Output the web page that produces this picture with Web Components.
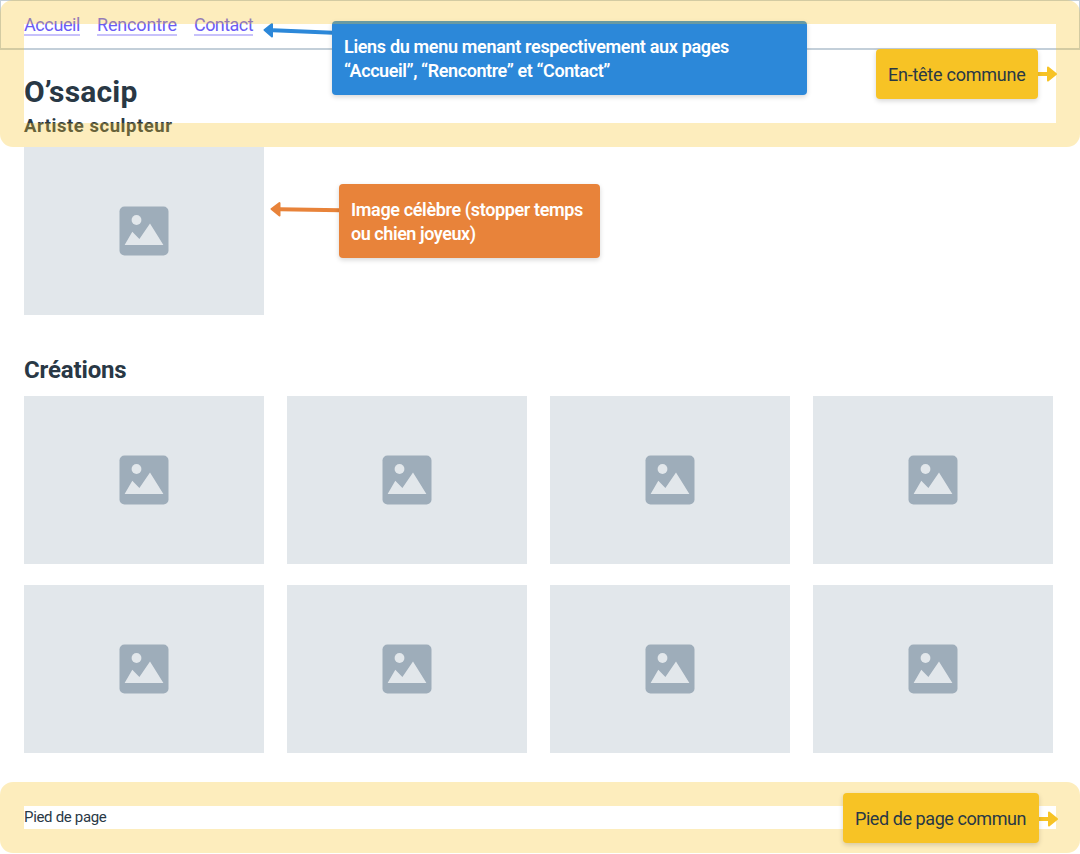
<!DOCTYPE html>
<html lang="fr">
<head>
<meta charset="utf-8">
<title>O’ssacip</title>
<style>
html,body{margin:0;background:#fff;overflow:hidden}
body{font-family:Roboto,"Liberation Sans",sans-serif;color:#293845}
</style>
</head>
<body>
<wire-page></wire-page>
<script>
const define = (name, html, after) => customElements.define(name, class extends HTMLElement {
  constructor() {
    super();
    const t = document.createElement('template');
    t.innerHTML = html;
    this.attachShadow({mode: 'open'}).append(t.content.cloneNode(true));
  }
  connectedCallback() { if (after) after(this); }
});

/* One line of text, tracked so that it fills the width given by its "w" attribute. */
define('fit-text', `<style>:host{display:block;white-space:nowrap}span{display:inline-block}</style><span><slot></slot></span>`, el => {
  const span = el.shadowRoot.querySelector('span');
  const n = el.textContent.length;
  const w = span.getBoundingClientRect().width;
  span.style.letterSpacing = ((+el.getAttribute('w') - w) / n) + 'px';
});

define('menu-link', `<style>
:host{display:block;font-size:18px;line-height:24px;color:#6b5cf5}
a{display:block;color:inherit;text-decoration:none;height:21px;border-bottom:2px solid #c7c1fb}
</style><a><slot></slot></a>`);

define('menu-bar', `<style>
:host{display:flex;gap:17px;box-sizing:border-box;height:50px;padding:12px 23px 0;border:1px solid #c3cfd9;border-bottom-width:2px}
</style><slot></slot>`);

define('image-box', `<style>
:host{display:flex;align-items:center;justify-content:center;width:240px;height:168px;background:#e2e7eb}
svg{display:block}
</style><svg width="50" height="50" viewBox="0 0 50 50"><rect x=".5" y=".5" width="49" height="49" rx="5" fill="#9eadba"/><circle cx="17.5" cy="14" r="4.9" fill="#e2e7eb"/><path d="M5.6 39 13.3 25.7 20.4 33 31 17.6 44.4 39Z" fill="#e2e7eb"/></svg>`);

define('image-grid', `<style>
:host{display:grid;grid-template-columns:repeat(4,240px);gap:21px 23px}
</style><slot></slot>`);

define('zone-frame', `<style>
:host{position:absolute;left:0;width:1080px;box-sizing:border-box;border:24px solid rgba(247,195,37,.3);border-radius:13px;pointer-events:none}
</style>`);

define('note-box', `<style>
:host{position:absolute;box-sizing:border-box;padding:14px 12px 0;border-radius:4px;font-size:18px;line-height:24px;background:var(--c);box-shadow:0 2px 5px rgba(0,0,0,.16)}
</style><slot></slot>`);

define('note-arrow', `<style>
:host{position:absolute;color:var(--c)}
svg{display:block;overflow:visible}
</style><svg width="1" height="1"><path class="l" fill="none" stroke="currentColor" stroke-width="4"/><path class="h" fill="currentColor" stroke="currentColor" stroke-width="2" stroke-linejoin="round"/></svg>`, el => {
  el.shadowRoot.querySelector('.l').setAttribute('d', el.getAttribute('line'));
  el.shadowRoot.querySelector('.h').setAttribute('d', el.getAttribute('head'));
});

define('wire-page', `<style>
:host{display:block;position:relative;width:1080px;height:854px;overflow:hidden}
main,footer{padding:0 24px}
h1,h2,p{margin:0;font-weight:700}
h1{font-size:30px;line-height:36px;padding-top:24px}
p{font-size:18.5px;line-height:24px;padding-top:4px}
.hero{margin-top:9px}
h2{font-size:24px;line-height:30px;margin:40px 0 11px}
footer{font-size:15px;line-height:24px;padding-top:52px}
.blue{--c:#2c88d9;left:332px;top:21px;width:475px;height:74px;color:#fff;font-weight:600}
.orange{--c:#e8833a;left:339px;top:184px;width:261px;height:74px;color:#fff;font-weight:600}
.top{--c:#f7c325;left:876px;top:49px;width:162px;height:50px}
.bot{--c:#f7c325;left:843px;top:793px;width:196px;height:50px}
.a1{--c:#2c88d9;left:263px;top:31px}
.a2{--c:#e8833a;left:270px;top:209px}
.a3{--c:#f7c325;left:1038px;top:74px}
.a4{--c:#f7c325;left:1039px;top:819px}
.f1{top:0;height:147px}
.f2{top:782px;height:71px}
</style>
<menu-bar><menu-link><fit-text w="56">Accueil</fit-text></menu-link><menu-link><fit-text w="80">Rencontre</fit-text></menu-link><menu-link><fit-text w="59">Contact</fit-text></menu-link></menu-bar>
<main>
<h1><fit-text w="113.5">O’ssacip</fit-text></h1>
<p><fit-text w="148.5">Artiste sculpteur</fit-text></p>
<image-box class="hero"></image-box>
<h2><fit-text w="102.5">Créations</fit-text></h2>
<image-grid><image-box></image-box><image-box></image-box><image-box></image-box><image-box></image-box><image-box></image-box><image-box></image-box><image-box></image-box><image-box></image-box></image-grid>
</main>
<footer><fit-text w="82.5">Pied de page</fit-text></footer>
<note-arrow class="a1" line="M10 -.7 L70 1.8" head="M1.5 -1 L9 -7 V5.5Z"></note-arrow>
<note-box class="blue"><fit-text w="385">Liens du menu menant respectivement aux pages</fit-text><fit-text w="266">“Accueil”, “Rencontre” et “Contact”</fit-text></note-box>
<note-arrow class="a2" line="M10 .3 L70 1.2" head="M1.5 0 L9.5 -6 V6.5Z"></note-arrow>
<note-box class="orange"><fit-text w="232">Image célèbre (stopper temps</fit-text><fit-text w="124.5">ou chien joyeux)</fit-text></note-box>
<zone-frame class="f1"></zone-frame>
<zone-frame class="f2"></zone-frame>
<note-arrow class="a3" line="M0 0 H10" head="M10 -6.5 L18 0 L10 6.5Z"></note-arrow>
<note-box class="top"><fit-text w="137.5">En-tête commune</fit-text></note-box>
<note-arrow class="a4" line="M0 0 H10" head="M10 -6.5 L18 0 L10 6.5Z"></note-arrow>
<note-box class="bot"><fit-text w="171">Pied de page commun</fit-text></note-box>`);
</script>
</body>
</html>
